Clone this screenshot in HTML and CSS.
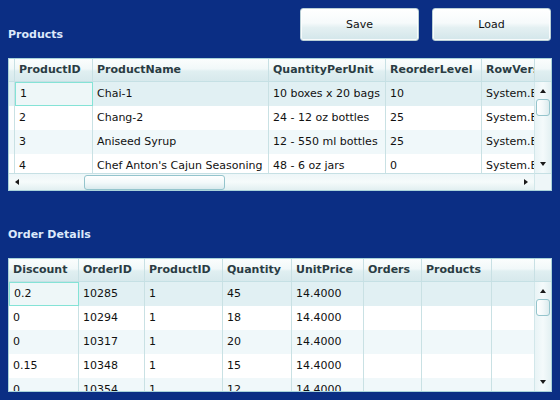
FILE: index.html
```html
<!DOCTYPE html>
<html>
<head>
<meta charset="utf-8">
<link rel="stylesheet" href="styles.css">
</head>
<body>
<div class="page">
  <div class="toolbar">
    <div class="label">Products</div>
    <div class="buttons">
      <button class="btn">Save</button>
      <button class="btn">Load</button>
    </div>
  </div>

  <div class="grid grid-top">
    <div class="head">
      <div class="hc c-rh"></div>
      <div class="hc w78">ProductID</div>
      <div class="hc w176">ProductName</div>
      <div class="hc w117">QuantityPerUnit</div>
      <div class="hc w96">ReorderLevel</div>
      <div class="hc w53">RowVersion</div>
      <div class="hc fill"></div>
    </div>
    <div class="body">
      <div class="row sel">
        <div class="c c-rh"></div>
        <div class="c w78 cur">1</div>
        <div class="c w176">Chai-1</div>
        <div class="c w117">10 boxes x 20 bags</div>
        <div class="c w96">10</div>
        <div class="c w53">System.Byte[]</div>
      </div>
      <div class="row">
        <div class="c c-rh"></div>
        <div class="c w78">2</div>
        <div class="c w176">Chang-2</div>
        <div class="c w117">24 - 12 oz bottles</div>
        <div class="c w96">25</div>
        <div class="c w53">System.Byte[]</div>
      </div>
      <div class="row alt">
        <div class="c c-rh"></div>
        <div class="c w78">3</div>
        <div class="c w176">Aniseed Syrup</div>
        <div class="c w117">12 - 550 ml bottles</div>
        <div class="c w96">25</div>
        <div class="c w53">System.Byte[]</div>
      </div>
      <div class="row">
        <div class="c c-rh"></div>
        <div class="c w78">4</div>
        <div class="c w176">Chef Anton's Cajun Seasoning</div>
        <div class="c w117">48 - 6 oz jars</div>
        <div class="c w96">0</div>
        <div class="c w53">System.Byte[]</div>
      </div>
    </div>
    <div class="vscroll">
      <span class="arr up"></span>
      <span class="vthumb"></span>
      <span class="vspace"></span>
      <span class="arr down"></span>
    </div>
    <div class="hscroll">
      <span class="arr left"></span>
      <span class="hthumb"></span>
      <span class="hspace"></span>
      <span class="arr right"></span>
    </div>
    <div class="corner"></div>
  </div>

  <div class="label label-od">Order Details</div>

  <div class="grid grid-bottom">
    <div class="head">
      <div class="hc w70">Discount</div>
      <div class="hc w66">OrderID</div>
      <div class="hc w78">ProductID</div>
      <div class="hc w69">Quantity</div>
      <div class="hc w72">UnitPrice</div>
      <div class="hc w58">Orders</div>
      <div class="hc w70">Products</div>
      <div class="hc w43"></div>
      <div class="hc fill"></div>
    </div>
    <div class="body">
      <div class="row sel">
        <div class="c w70 cur">0.2</div>
        <div class="c w66">10285</div>
        <div class="c w78">1</div>
        <div class="c w69">45</div>
        <div class="c w72">14.4000</div>
        <div class="c w58"></div>
        <div class="c w70"></div>
        <div class="c w43"></div>
      </div>
      <div class="row">
        <div class="c w70">0</div>
        <div class="c w66">10294</div>
        <div class="c w78">1</div>
        <div class="c w69">18</div>
        <div class="c w72">14.4000</div>
        <div class="c w58"></div>
        <div class="c w70"></div>
        <div class="c w43"></div>
      </div>
      <div class="row alt">
        <div class="c w70">0</div>
        <div class="c w66">10317</div>
        <div class="c w78">1</div>
        <div class="c w69">20</div>
        <div class="c w72">14.4000</div>
        <div class="c w58"></div>
        <div class="c w70"></div>
        <div class="c w43"></div>
      </div>
      <div class="row">
        <div class="c w70">0.15</div>
        <div class="c w66">10348</div>
        <div class="c w78">1</div>
        <div class="c w69">15</div>
        <div class="c w72">14.4000</div>
        <div class="c w58"></div>
        <div class="c w70"></div>
        <div class="c w43"></div>
      </div>
      <div class="row alt">
        <div class="c w70">0</div>
        <div class="c w66">10354</div>
        <div class="c w78">1</div>
        <div class="c w69">12</div>
        <div class="c w72">14.4000</div>
        <div class="c w58"></div>
        <div class="c w70"></div>
        <div class="c w43"></div>
      </div>
    </div>
    <div class="vscroll">
      <span class="arr up"></span>
      <span class="vthumb"></span>
      <span class="vspace"></span>
      <span class="arr down"></span>
    </div>
  </div>
</div>
</body>
</html>
```

FILE: styles.css
```css
html, body {
  margin: 0;
  padding: 0;
  background: #0b2e84;
}
body {
  font-family: "DejaVu Sans", Verdana, sans-serif;
  font-size: 11px;
}
.page {
  width: 544px;
  padding: 8px;
  display: flex;
  flex-direction: column;
}
.toolbar {
  height: 50px;
  display: flex;
  justify-content: space-between;
  align-items: flex-start;
}
.label {
  color: #dce9fb;
  font-weight: bold;
  line-height: 13px;
  height: 13px;
  margin-top: 20px;
  white-space: nowrap;
}
.label-od {
  margin-top: 37px;
  margin-bottom: 17px;
}
.buttons {
  display: flex;
  gap: 13px;
  margin-right: 1px;
}
.btn {
  width: 119px;
  height: 33px;
  border: 1px solid #b9cfd6;
  border-radius: 3px;
  background: linear-gradient(#ffffff 0%, #f6fafb 45%, #e4f0f2 60%, #d3e6ea 100%);
  font-family: "DejaVu Sans", Verdana, sans-serif;
  font-size: 11px;
  color: #111;
  padding: 0;
  box-shadow: inset 0 0 0 1px rgba(255,255,255,0.8);
}

.grid {
  border: 1px solid #a9d3da;
  background: #fff;
  display: grid;
  grid-template-columns: 1fr 17px;
  overflow: hidden;
  color: #111;
}
.grid-top {
  height: 131px;
  grid-template-rows: 23px 1fr 17px;
}
.grid-bottom {
  height: 132px;
  grid-template-rows: 23px 1fr;
}
.head {
  grid-column: 1 / 3;
  grid-row: 1;
  display: flex;
  background: linear-gradient(#fbfdfd 0%, #f1f8f9 45%, #e0eff1 55%, #d7e9ec 100%);
  border-bottom: 1px solid #c5e0e4;
  box-sizing: border-box;
}
.hc {
  flex: none;
  box-sizing: border-box;
  border-right: 1px solid #c8e0e4;
  padding-left: 4px;
  line-height: 22px;
  font-weight: bold;
  color: #2a3c43;
  white-space: nowrap;
  overflow: hidden;
}
.hc.fill {
  flex: 1;
  border-right: none;
}
.body {
  grid-column: 1;
  grid-row: 2;
  overflow: hidden;
  min-height: 0;
}
.row {
  display: flex;
  height: 24px;
  background: #fff;
}
.row.alt { background: #f0f8fa; }
.row.sel { background: #e1f0f3; }
.c {
  flex: none;
  box-sizing: border-box;
  border-right: 1px solid #c9e1e4;
  padding-left: 4px;
  line-height: 24px;
  white-space: nowrap;
  overflow: hidden;
}
.c.cur {
  border: 1px solid #84e3d6;
  line-height: 22px;
  padding-left: 4px;
  background: #eef7f8;
}
.c-rh { width: 6px; padding: 0 !important; }
.w78 { width: 78px; }
.w176 { width: 176px; }
.w117 { width: 117px; }
.w96 { width: 96px; }
.w53 { width: 53px; }
.body .w53 { border-right: none; }
.w70 { width: 70px; }
.w66 { width: 66px; }
.w69 { width: 69px; }
.w72 { width: 72px; }
.w58 { width: 58px; }
.w43 { width: 43px; }

.vscroll {
  grid-column: 2;
  grid-row: 2;
  display: flex;
  flex-direction: column;
  align-items: center;
  background: linear-gradient(90deg, #e9f4f6, #f4fafb 50%, #e3f0f2);
  border-left: 1px solid #d2e7ea;
  min-height: 0;
}
.hscroll {
  grid-column: 1;
  grid-row: 3;
  display: flex;
  align-items: center;
  background: linear-gradient(#edf6f8, #f6fbfb 50%, #e2eff1);
  border-top: 1px solid #c6e0e4;
}
.corner {
  grid-column: 2;
  grid-row: 3;
  background: #eef6f8;
  border-top: 1px solid #c6e0e4;
  border-left: 1px solid #d2e7ea;
}
.arr {
  flex: none;
  width: 0;
  height: 0;
  border-style: solid;
  border-color: transparent;
}
.arr.up {
  margin-top: 7px;
  border-width: 0 3px 4px 3px;
  border-bottom-color: #1a1a1a;
}
.arr.down {
  margin-bottom: 7px;
  border-width: 4px 3px 0 3px;
  border-top-color: #1a1a1a;
}
.arr.left {
  margin-left: 6px;
  border-width: 3px 4px 3px 0;
  border-right-color: #1a1a1a;
}
.arr.right {
  margin-right: 6px;
  border-width: 3px 0 3px 4px;
  border-left-color: #1a1a1a;
}
.vthumb {
  flex: none;
  margin-top: 6px;
  width: 14px;
  height: 17px;
  box-sizing: border-box;
  border: 1px solid #94c4cc;
  border-radius: 3px;
  background: linear-gradient(90deg, #ffffff, #f2f8f9 50%, #dcebee);
}
.vspace { flex: 1; }
.hthumb {
  flex: none;
  margin-left: 65px;
  width: 141px;
  height: 15px;
  box-sizing: border-box;
  border: 1px solid #94c4cc;
  border-radius: 3px;
  background: linear-gradient(#ffffff, #f3f9fa 50%, #d9eaed);
}
.hspace { flex: 1; }
```
